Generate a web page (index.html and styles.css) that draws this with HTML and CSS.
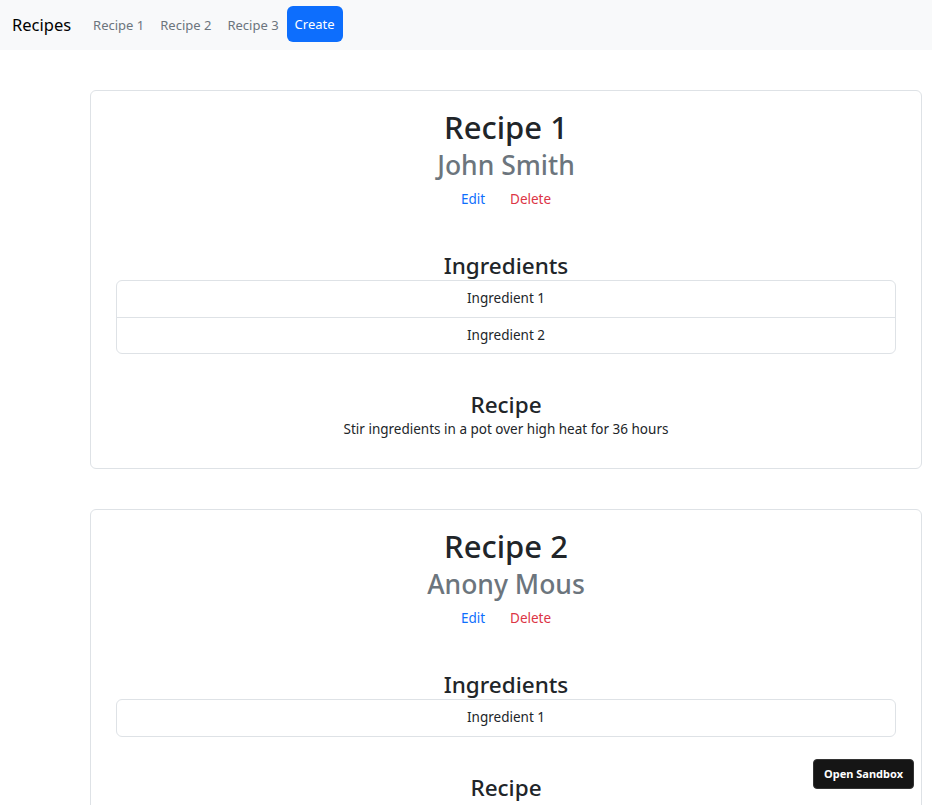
FILE: index.html
```html
<!DOCTYPE html>
<html lang="en">
<head>
<meta charset="utf-8">
<title>Recipes</title>
<link rel="stylesheet" href="styles.css">
</head>
<body>
<nav class="navbar">
  <a class="brand" href="#">Recipes</a>
  <a class="nav-link" href="#">Recipe 1</a>
  <a class="nav-link" href="#">Recipe 2</a>
  <a class="nav-link" href="#">Recipe 3</a>
  <a class="btn-create" href="#">Create</a>
</nav>
<main class="content">
  <section class="card">
    <h1 class="title">Recipe 1</h1>
    <h2 class="author">John Smith</h2>
    <div class="actions"><a class="edit" href="#">Edit</a><a class="delete" href="#">Delete</a></div>
    <h3 class="section-title ingredients-title">Ingredients</h3>
    <ul class="list-group">
      <li class="list-item">Ingredient 1</li>
      <li class="list-item">Ingredient 2</li>
    </ul>
    <h3 class="section-title recipe-title">Recipe</h3>
    <p class="instructions">Stir ingredients in a pot over high heat for 36 hours</p>
  </section>
  <section class="card">
    <h1 class="title">Recipe 2</h1>
    <h2 class="author">Anony Mous</h2>
    <div class="actions"><a class="edit" href="#">Edit</a><a class="delete" href="#">Delete</a></div>
    <h3 class="section-title ingredients-title">Ingredients</h3>
    <ul class="list-group">
      <li class="list-item">Ingredient 1</li>
    </ul>
    <h3 class="section-title recipe-title">Recipe</h3>
    <p class="instructions">Add ingredients and serve</p>
  </section>
</main>
<a class="sandbox-btn" href="#">Open Sandbox</a>
</body>
</html>
```
FILE: styles.css
```css
* { box-sizing: border-box; }
html, body { margin: 0; padding: 0; }
body {
  font-family: "Noto Sans", "Open Sans", sans-serif;
  color: #212529;
  background: #fff;
  font-size: 13.5px;
  overflow: hidden;
  height: 805px;
}
a { text-decoration: none; }

.navbar {
  height: 50px;
  background: #f8f9fa;
  display: flex;
  align-items: center;
  padding: 0 0 0 12px;
}
.brand {
  font-size: 16.5px;
  color: #000;
  margin-right: 14px;
  line-height: 24px;
}
.nav-link {
  font-size: 13px;
  color: #6c757d;
  padding: 0 8px;
  line-height: 20px;
}
.btn-create {
  margin-left: 0;
  background: #0d6efd;
  color: #fff;
  font-size: 13px;
  height: 36px;
  padding: 0 8px;
  display: flex;
  align-items: center;
  border-radius: 6px;
  margin-top: -2px;
}

.content {
  padding: 40px 10px 0 90px;
  display: flex;
  flex-direction: column;
  gap: 40px;
}
.card {
  border: 1px solid #dee2e6;
  border-radius: 6px;
  padding: 16px 25px 29px;
  text-align: center;
}
.title {
  margin: 0;
  font-size: 31px;
  font-weight: 500;
  line-height: 40px;
}
.author {
  margin: 0;
  font-size: 26.5px;
  font-weight: 500;
  line-height: 36px;
  color: #6c757d;
}
.actions {
  display: flex;
  justify-content: center;
  gap: 25px;
  line-height: 20px;
  margin-top: 6px;
}
.edit { color: #0d6efd; }
.delete { color: #dc3545; }
.section-title {
  margin: 0;
  font-size: 22.5px;
  font-weight: 500;
  line-height: 28px;
}
.ingredients-title { margin-top: 43px; }
.recipe-title { margin-top: 37px; }
.list-group {
  list-style: none;
  margin: 0;
  padding: 0;
  border: 1px solid #dee2e6;
  border-radius: 6px;
}
.list-item {
  height: 36px;
  line-height: 35px;
}
.list-item + .list-item { border-top: 1px solid #dee2e6; }
.instructions {
  margin: 0;
  line-height: 20px;
}

.sandbox-btn {
  position: fixed;
  right: 18px;
  bottom: 16px;
  background: #151515;
  color: #fff;
  font-family: "Noto Sans", sans-serif;
  font-weight: 700;
  font-size: 11px;
  height: 30px;
  line-height: 28px;
  padding: 0 10px;
  border-radius: 4px;
  border: 1px solid #333;
}
```
